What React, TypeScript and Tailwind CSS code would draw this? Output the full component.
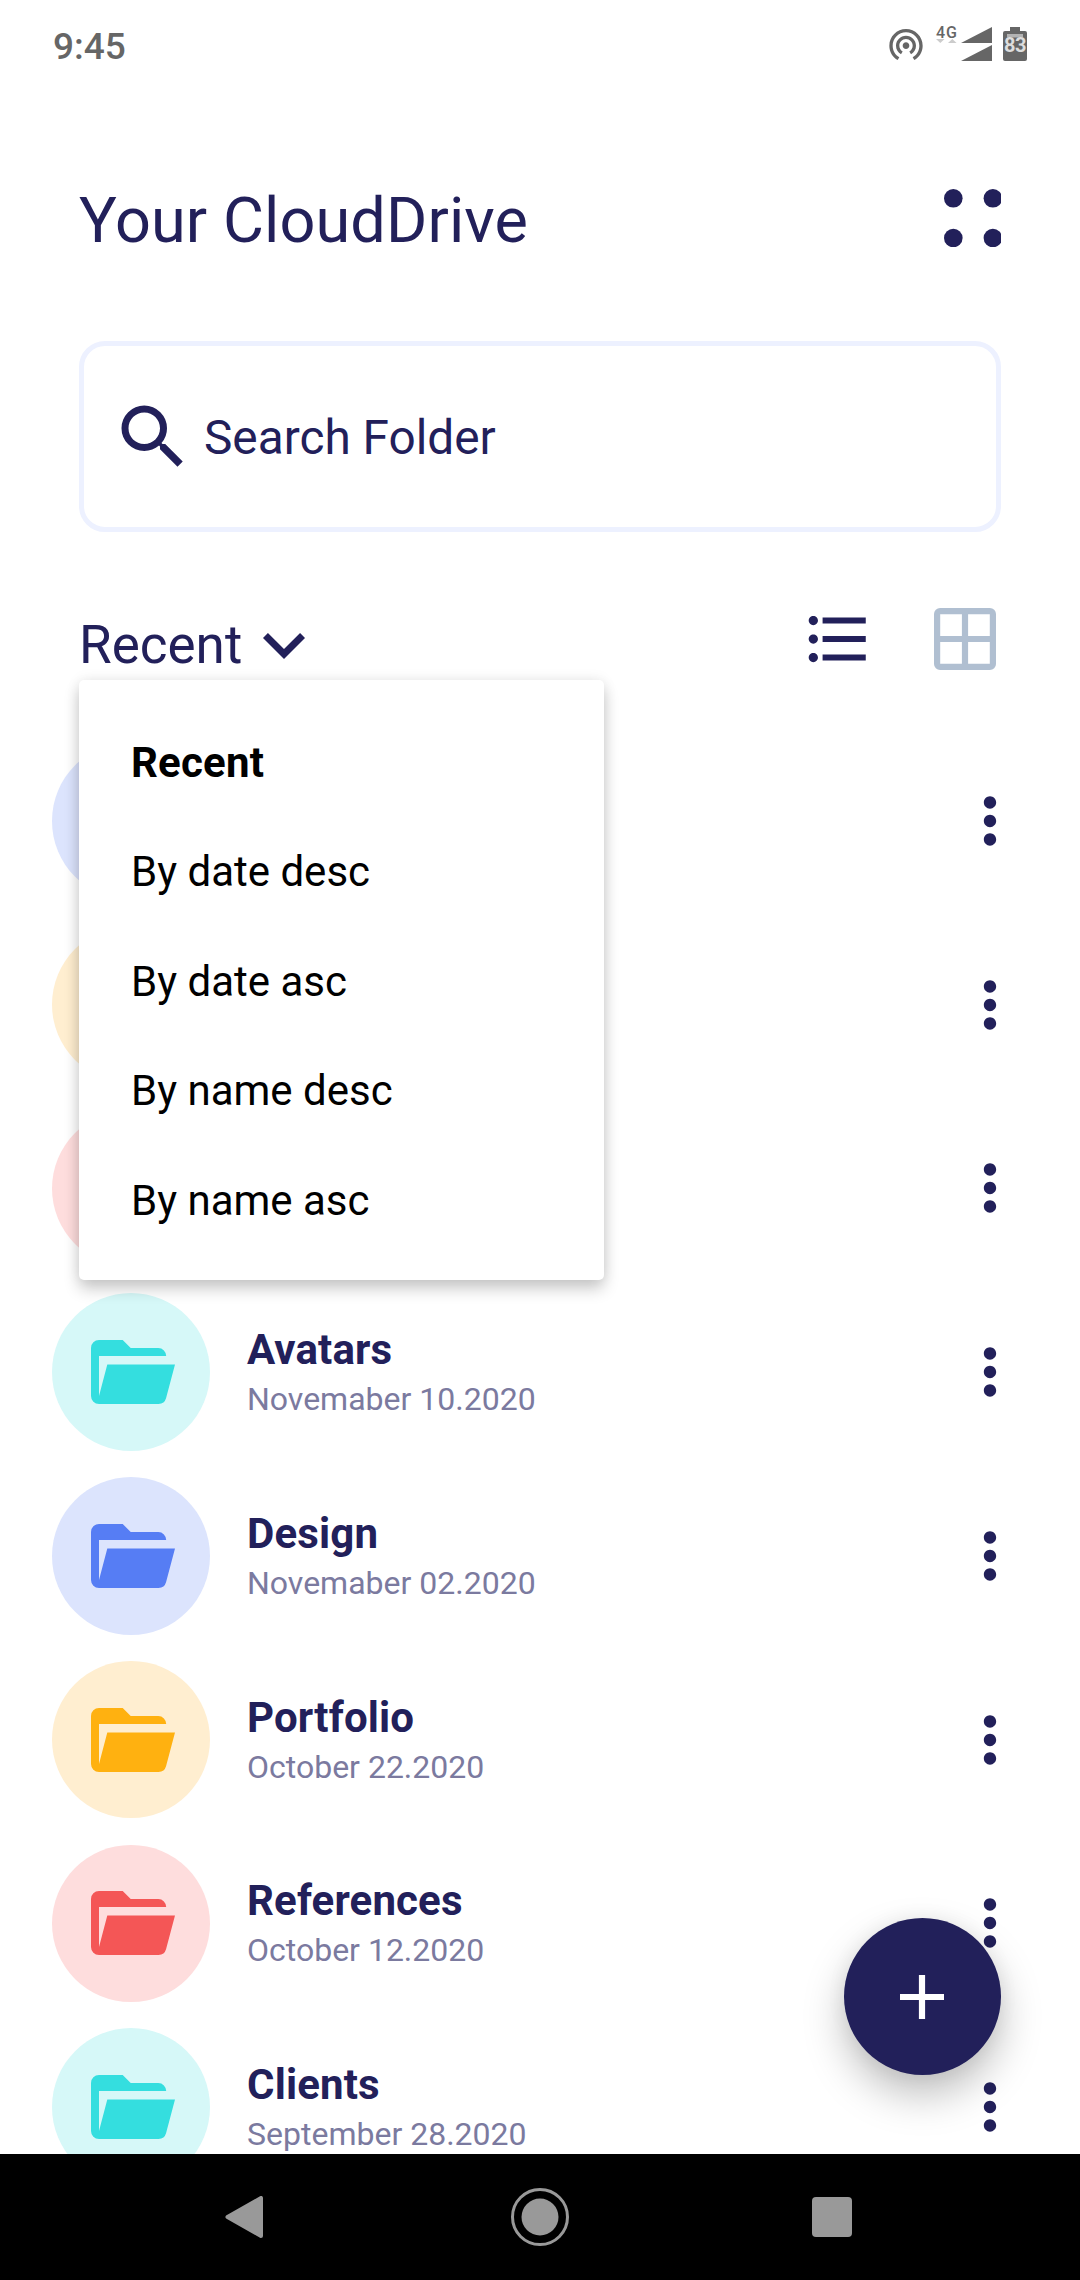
import React from "react";
import {
  MdFormatListBulleted,
  MdKeyboardArrowDown,
  MdMoreVert,
  MdSearch,
  MdWifiTethering,
} from "react-icons/md";

type Tone = "blue" | "amber" | "red" | "teal";

const tones: Record<Tone, string> = {
  blue: "bg-[#dce4fd] text-[#567df4]",
  amber: "bg-[#ffeed0] text-[#ffb110]",
  red: "bg-[#fedddd] text-[#f45656]",
  teal: "bg-[#d6f8f8] text-[#34dedf]",
};

const folders: { name?: string; date?: string; tone: Tone }[] = [
  { tone: "blue" },
  { tone: "amber" },
  { tone: "red" },
  { name: "Avatars", date: "Novemaber 10.2020", tone: "teal" },
  { name: "Design", date: "Novemaber 02.2020", tone: "blue" },
  { name: "Portfolio", date: "October 22.2020", tone: "amber" },
  { name: "References", date: "October 12.2020", tone: "red" },
  { name: "Clients", date: "September 28.2020", tone: "teal" },
];

const sortOptions = ["Recent", "By date desc", "By date asc", "By name desc", "By name asc"];

function FolderIcon() {
  return (
    <svg width="84" height="64" viewBox="0 0 84 64" fill="currentColor">
      <path d="M8 0H31.7L39.7 8H67.3A8 8 0 0 1 75.2 16H8V56L16.3 24.4H84L75.1 58A8 8 0 0 1 67.3 64H8A8 8 0 0 1 0 56V8A8 8 0 0 1 8 0Z" />
    </svg>
  );
}

function GridIcon() {
  return (
    <svg width="62" height="62" viewBox="0 0 62 62" fill="none" stroke="#b0bfd1" strokeWidth="6.2">
      <rect x="3.1" y="3.1" width="55.8" height="55.8" rx="3" />
      <path d="M31 3V59M3 31H59" />
    </svg>
  );
}

function AppsIcon() {
  return (
    <svg width="57" height="58" viewBox="0 0 57 58" fill="#22205a">
      <circle cx="9.3" cy="9.3" r="9.3" />
      <circle cx="48.9" cy="9.3" r="9.3" />
      <circle cx="9.3" cy="49" r="9.3" />
      <circle cx="48.9" cy="49" r="9.3" />
    </svg>
  );
}

function StatusBar() {
  return (
    <header className="flex h-[84px] shrink-0 items-start justify-between pl-[53px] pr-[53px] text-[#666666]">
      <span className="mt-[25px] text-[37px] font-medium leading-[43px]">9:45</span>
      <div className="flex items-start pt-[24px]">
        <MdWifiTethering size={40} className="mr-[10px]" />
        <div className="mr-[3px] flex w-[22px] flex-col pt-[2px]">
          <span className="text-[16px] font-medium leading-[13px] tracking-[1px]">4G</span>
          <svg width="22" height="4" viewBox="0 0 22 4" fill="#cccccc">
            <path d="M0 0H8.6L4.3 4ZM12 4H20.6L16.3 0Z" />
          </svg>
        </div>
        <svg width="31" height="34" viewBox="0 0 31 34" className="mr-[11px] mt-[3px]" fill="currentColor">
          <path d="M0 16L31 0V16ZM0 34L31 18V34Z" />
        </svg>
        <div className="relative mt-[3px] h-[34px] w-[24px]">
          <svg width="24" height="34" viewBox="0 0 24 34">
            <path d="M7 0H17V4H22A2 2 0 0 1 24 6V32A2 2 0 0 1 22 34H2A2 2 0 0 1 0 32V6A2 2 0 0 1 2 4H7Z" fill="#666666" />
            <path d="M4 7H20V10.5H4Z" fill="#b3b3b3" />
          </svg>
          <span className="absolute inset-x-[-2px] top-[7px] text-center text-[20px] font-bold leading-[22px] tracking-[-0.5px] text-[#dddddd]">
            83
          </span>
        </div>
      </div>
    </header>
  );
}

function SortMenu() {
  return (
    <ul className="absolute left-[79px] top-[680px] flex h-[600px] w-[525px] flex-col rounded-[5px] bg-white pl-[52px] pt-[28px] text-[42px] leading-[109.4px] text-black shadow-[0_9px_16px_rgba(0,0,0,0.2),0_0_14px_rgba(0,0,0,0.08)]">
      {sortOptions.map((option, i) => (
        <li key={option} className={i === 0 ? "font-bold tracking-[0.2px]" : "font-normal"}>
          {option}
        </li>
      ))}
    </ul>
  );
}

function FolderRow({ name, date, tone }: { name?: string; date?: string; tone: Tone }) {
  return (
    <li className="flex h-[183.75px] shrink-0 items-center pl-[52px] pr-[53px]">
      <div className={`flex size-[157.5px] shrink-0 items-center justify-center rounded-full pl-[4px] ${tones[tone]}`}>
        <FolderIcon />
      </div>
      <div className="ml-[37.5px] mt-[-1px] flex flex-1 flex-col gap-[7px]">
        {name && <span className="text-[42px] font-bold leading-[49px] tracking-[0.15px]">{name}</span>}
        {date && <span className="text-[32px] leading-[37px] text-[#7b7a9f]">{date}</span>}
      </div>
      <MdMoreVert size={74} />
    </li>
  );
}

function NavBar() {
  return (
    <nav className="relative flex h-[126px] shrink-0 items-center justify-between bg-black pl-[225px] pr-[228px] text-[#999999]">
      <svg width="38" height="42" viewBox="0 0 38 42" fill="currentColor" stroke="currentColor" strokeWidth="4" strokeLinejoin="round">
        <path d="M2.5 21L36 2V40Z" />
      </svg>
      <svg width="60" height="60" viewBox="0 0 60 60" className="ml-[5px]">
        <circle cx="30" cy="30" r="27.5" fill="none" stroke="currentColor" strokeWidth="3" />
        <circle cx="30" cy="30" r="18.5" fill="currentColor" />
      </svg>
      <span className="size-[40px] rounded-[4px] bg-[#999999]" />
    </nav>
  );
}

export default function App() {
  return (
    <div className="relative flex h-[2280px] w-[1080px] flex-col overflow-hidden bg-white font-['Roboto',sans-serif] text-[#22205a]">
      <StatusBar />
      <main className="flex min-h-0 flex-1 flex-col overflow-hidden">
        <div className="flex h-[173px] shrink-0 items-start justify-between px-[79px] pt-[99px]">
          <h1 className="mt-[1px] text-[63px] leading-[74px] tracking-[0.1px]">Your CloudDrive</h1>
          <div className="mt-[6px]">
            <AppsIcon />
          </div>
        </div>
        <div className="mx-[79px] mt-[84px] flex h-[191px] shrink-0 items-center rounded-[26px] border-[5px] border-[#edf1ff] pl-[27px]">
          <MdSearch size={84} />
          <span className="ml-[9px] mt-[2px] text-[47.75px] leading-[56px]">Search Folder</span>
        </div>
        <div className="flex h-[197px] shrink-0 items-start pl-[79px] pr-[84px] pt-[70px]">
          <span className="mt-[12px] text-[53px] leading-[62px]">Recent</span>
          <MdKeyboardArrowDown size={84} className="mt-[1px]" />
          <div className="ml-auto flex items-center gap-[59px]">
            <MdFormatListBulleted size={74} />
            <GridIcon />
          </div>
        </div>
        <ul className="flex flex-col">
          {folders.map((folder, i) => (
            <FolderRow key={i} {...folder} />
          ))}
        </ul>
      </main>
      <NavBar />
      <SortMenu />
      <button
        aria-label="Add folder"
        className="absolute left-[844px] top-[1918px] flex size-[157px] items-center justify-center rounded-full bg-[#22205a] pr-[1px] shadow-[0_20px_40px_rgba(0,0,0,0.25),0_0_20px_rgba(0,0,0,0.06)]"
      >
        <svg width="44" height="44" viewBox="0 0 44 44" fill="none" stroke="white" strokeWidth="6.2">
          <path d="M22 0V44M0 22H44" />
        </svg>
      </button>
    </div>
  );
}
